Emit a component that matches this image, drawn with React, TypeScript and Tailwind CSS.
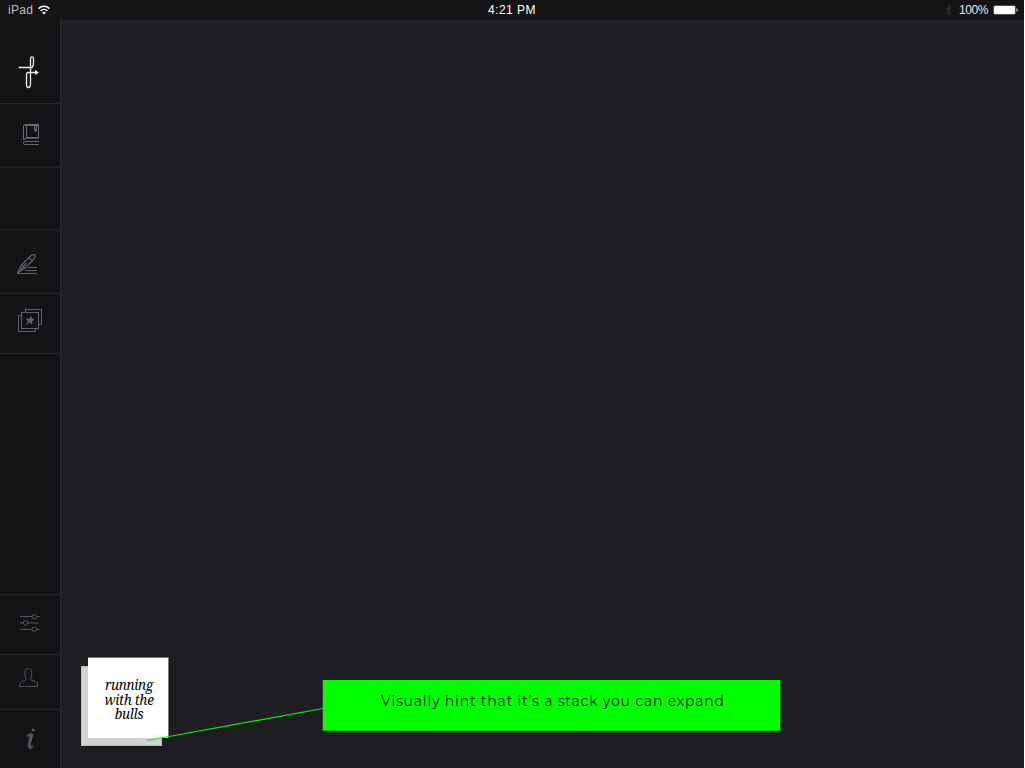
import React from 'react';

function StatusBar() {
  return (
    <header className="grid h-5 shrink-0 grid-cols-3 items-center bg-[#141416] font-['Liberation_Sans',sans-serif] text-[12px] leading-5 text-[#e4e4e4]">
      <div className="flex items-center gap-[5px] pl-2">
        <span className="w-[25px] whitespace-nowrap text-[#bdbdbd] tracking-[0.3px]">iPad</span>
        <svg width="12" height="10" viewBox="0 0 12 10" fill="none" stroke="#f5f5f5" strokeWidth="1.5">
          <path d="M.6 3.6C3.6.6 8.400.6 11.400 3.600M2.600 5.900C4.500 4.100 7.500 4.100 9.400 5.900" />
          <path d="M6 9.600 4 7.500Q6 6 8 7.500Z" fill="#f5f5f5" stroke="none" />
        </svg>
      </div>
      <div className="text-center tracking-[0.45px] text-white">4:21 PM</div>
      <div className="flex items-center justify-end pr-1.5">
        <svg className="mr-[7px]" width="7" height="11" viewBox="0 0 7 11" fill="none" stroke="#303034" strokeWidth="1">
          <path d="M.5 3 6 8 3.500 10.500V.5L6 3 .5 8" />
        </svg>
        <span className="mr-[5px] tracking-[-0.4px]">100%</span>
        <svg width="25" height="10" viewBox="0 0 25 10">
          <rect x=".5" y=".5" width="22" height="9" rx="1.500" fill="none" stroke="#4c4c4e" />
          <rect x="1" y="1" width="21" height="8" rx="1" fill="#fff" />
          <path d="M23.500 3Q26 5 23.500 7Z" fill="#ddd" />
        </svg>
      </div>
    </header>
  );
}

function Logo() {
  return (
    <svg className="ml-[18px] mt-[36px]" width="22" height="33" viewBox="0 0 22 33" fill="none" stroke="#ededf2" strokeWidth="1.300">
      <path d="M.5 11.500H14Q15.500 10 15.500 7V3.500Q15.500.8 14 .8T12.500 3.500V28Q12.500 31.500 10.500 31.500T8.500 28.500V18.500Q8.500 16.500 10.500 16.500H18" />
      <path d="M17 14 21 16.500 17 19Z" fill="#ededf2" stroke="none" />
    </svg>
  );
}

function BookIcon() {
  return (
    <svg className="ml-[23px] mt-[20px]" width="17" height="22" viewBox="0 0 17 22" fill="none" stroke="#686871" strokeWidth="1">
      <path d="M16 .5H1.500L.5 1.500V16M3.500 1.500V13.500M16 1.500H1.500M15.500 .5V14M16 13.500H3.500L1 15.500M16 17.500H1.500Q.5 17.500.5 19T1.500 20.500H16" />
      <path d="M16 14.500H1" stroke="#505058" />
      <path d="M11.500 1V6.500M12.500 5V8M13.500 7V1" strokeWidth="1.200" />
    </svg>
  );
}

function PenIcon() {
  return (
    <svg className="ml-[17px] mt-[24px]" width="21" height="21" viewBox="0 0 21 21" fill="none" stroke="#606068" strokeWidth="1.200">
      <path d="M.5 18.800 4 11.500 13.500 2Q16.500-.2 18 1 19 2.500 16.500 5.500L7.500 14.500ZM3 16.300 8 10.500M4.500 11 8 14M12 3.500 15.500 7M8 10.500 9.500 9" />
      <path d="M11 13.500H20M8 16.500H20M0 19.500H20" strokeWidth="1" />
    </svg>
  );
}

function PinsIcon() {
  return (
    <svg className="ml-[18px] mt-[15px]" width="24" height="24" viewBox="0 0 24 24" fill="none" stroke="#62626a" strokeWidth="1">
      <path d="M7.500 3.500V.5H23.500V15.500H20.500M3.500 6.500H.5V22.500H17.500V19.500" />
      <rect x="3.500" y="3.500" width="17" height="16" />
      <path d="M12 7 16 11 14.800 11.500 13.800 12.600 14 15.500 11.500 13.200 8 15.500 10.200 12 8 9.800 11.300 9.900 12.200 8.800Z" fill="#62626a" strokeWidth=".4" />
    </svg>
  );
}

function SlidersIcon() {
  return (
    <svg className="ml-[20px] mt-[18px]" width="20" height="20" viewBox="0 0 20 20" fill="none" stroke="#55555b" strokeWidth="1">
      <path d="M0 3.500H12M17 3.500H19.500M0 16.500H12M17 16.500H19.500" />
      <path d="M0 10H3M8 10H19" stroke="#343438" strokeWidth="2" />
      <circle cx="14.300" cy="3.700" r="2.200" />
      <circle cx="5.500" cy="10" r="2.200" />
      <circle cx="14.300" cy="16.300" r="2.200" />
    </svg>
  );
}

function PersonIcon() {
  return (
    <svg className="ml-[19px] mt-[13px]" width="19" height="19" viewBox="0 0 19 19" fill="none" stroke="#515158" strokeWidth="1">
      <path d="M0 18.500H19M18.500 18V16Q18.500 14 16 13.400L12.500 12.500Q10.500 11.500 12 9.500 13 8 12.700 4 12 .5 9.300.5T5.800 4Q5.500 8 6.800 9.500 8 11.500 6 12.500L2.500 13.500Q.3 14.500.5 18" />
    </svg>
  );
}

function InfoIcon() {
  return (
    <svg className="ml-[26px] mt-[18px]" width="10" height="22" viewBox="0 0 10 22" fill="none" stroke="#55555d">
      <circle cx="7.300" cy="2" r="1.600" fill="#55555d" stroke="none" />
      <path d="M1.200 8.500Q3 5.800 5 6T5.800 9L3.500 16.500Q2.500 20.300 4.200 20 5.500 19.500 6.500 17.500" strokeWidth="1.800" />
      <path d="M5 6.500 3 19" strokeWidth="2.600" />
    </svg>
  );
}

function Cell({ className, children }: { className: string; children?: React.ReactNode }) {
  return <div className={`shrink-0 border-[#252528] ${className}`}>{children}</div>;
}

function Sidebar() {
  return (
    <nav className="flex w-[61px] shrink-0 flex-col border-r border-[#29292e] bg-[#131315]">
      <Cell className="h-[84px] border-b"><Logo /></Cell>
      <Cell className="h-[64px] border-b-2 border-b-[#1c1c1f]"><BookIcon /></Cell>
      <Cell className="h-[63px] border-b-2 border-b-[#1c1c1f]" />
      <Cell className="h-[63px] border-b"><div className="-mt-px"><PenIcon /></div></Cell>
      <Cell className="h-[60px] border-b"><PinsIcon /></Cell>
      <Cell className="h-[241px] border-b" />
      <Cell className="h-[60px] border-b"><SlidersIcon /></Cell>
      <Cell className="h-[55px] border-b"><PersonIcon /></Cell>
      <div className="flex-1"><InfoIcon /></div>
    </nav>
  );
}

function Stack() {
  return (
    <div className="relative ml-5 h-[89px] w-[88px] shrink-0">
      <div className="absolute left-0 top-[9px] h-20 w-[81px] border border-[#bcbcbd] bg-[#d2d2d2]" />
      <div className="absolute left-[7px] top-0 h-[81px] w-[81px] border-r border-t border-[#77777a] bg-white pl-[2px] pt-5 text-center font-['Noto_Serif','Liberation_Serif',serif] text-[13.500px] italic leading-[14.500px] tracking-[-0.3px] text-black">
        running<br />with the<br />bulls
      </div>
    </div>
  );
}

export default function App() {
  return (
    <div className="h-[768px] w-[1025px] overflow-hidden bg-white pr-px">
      <div className="flex h-full flex-col bg-[#1e1d22]">
        <StatusBar />
        <div className="flex min-h-0 flex-1">
          <Sidebar />
          <main className="relative flex flex-1 items-end">
            <div className="mb-[22px] flex items-start">
              <Stack />
              <div className="ml-[153px] mt-[23px] h-[51px] w-[459px] border border-t-0 border-x-[#1c5a20] border-b-[#04c704] bg-[#00ff00] bg-clip-padding pl-[3px] pt-[11px] text-center font-['Montserrat','Gotham','Noto_Sans',sans-serif] text-[14px] leading-5 tracking-[0.8px] text-[#041a06]">
                Visually hint that it’s a stack you can expand
              </div>
            </div>
            <svg className="absolute bottom-[26px] left-[86px]" width="177" height="35" viewBox="0 0 177 35">
              <path d="M0 33.500 176 1.500" stroke="#00f500" strokeWidth="1.200" />
            </svg>
          </main>
        </div>
      </div>
    </div>
  );
}
